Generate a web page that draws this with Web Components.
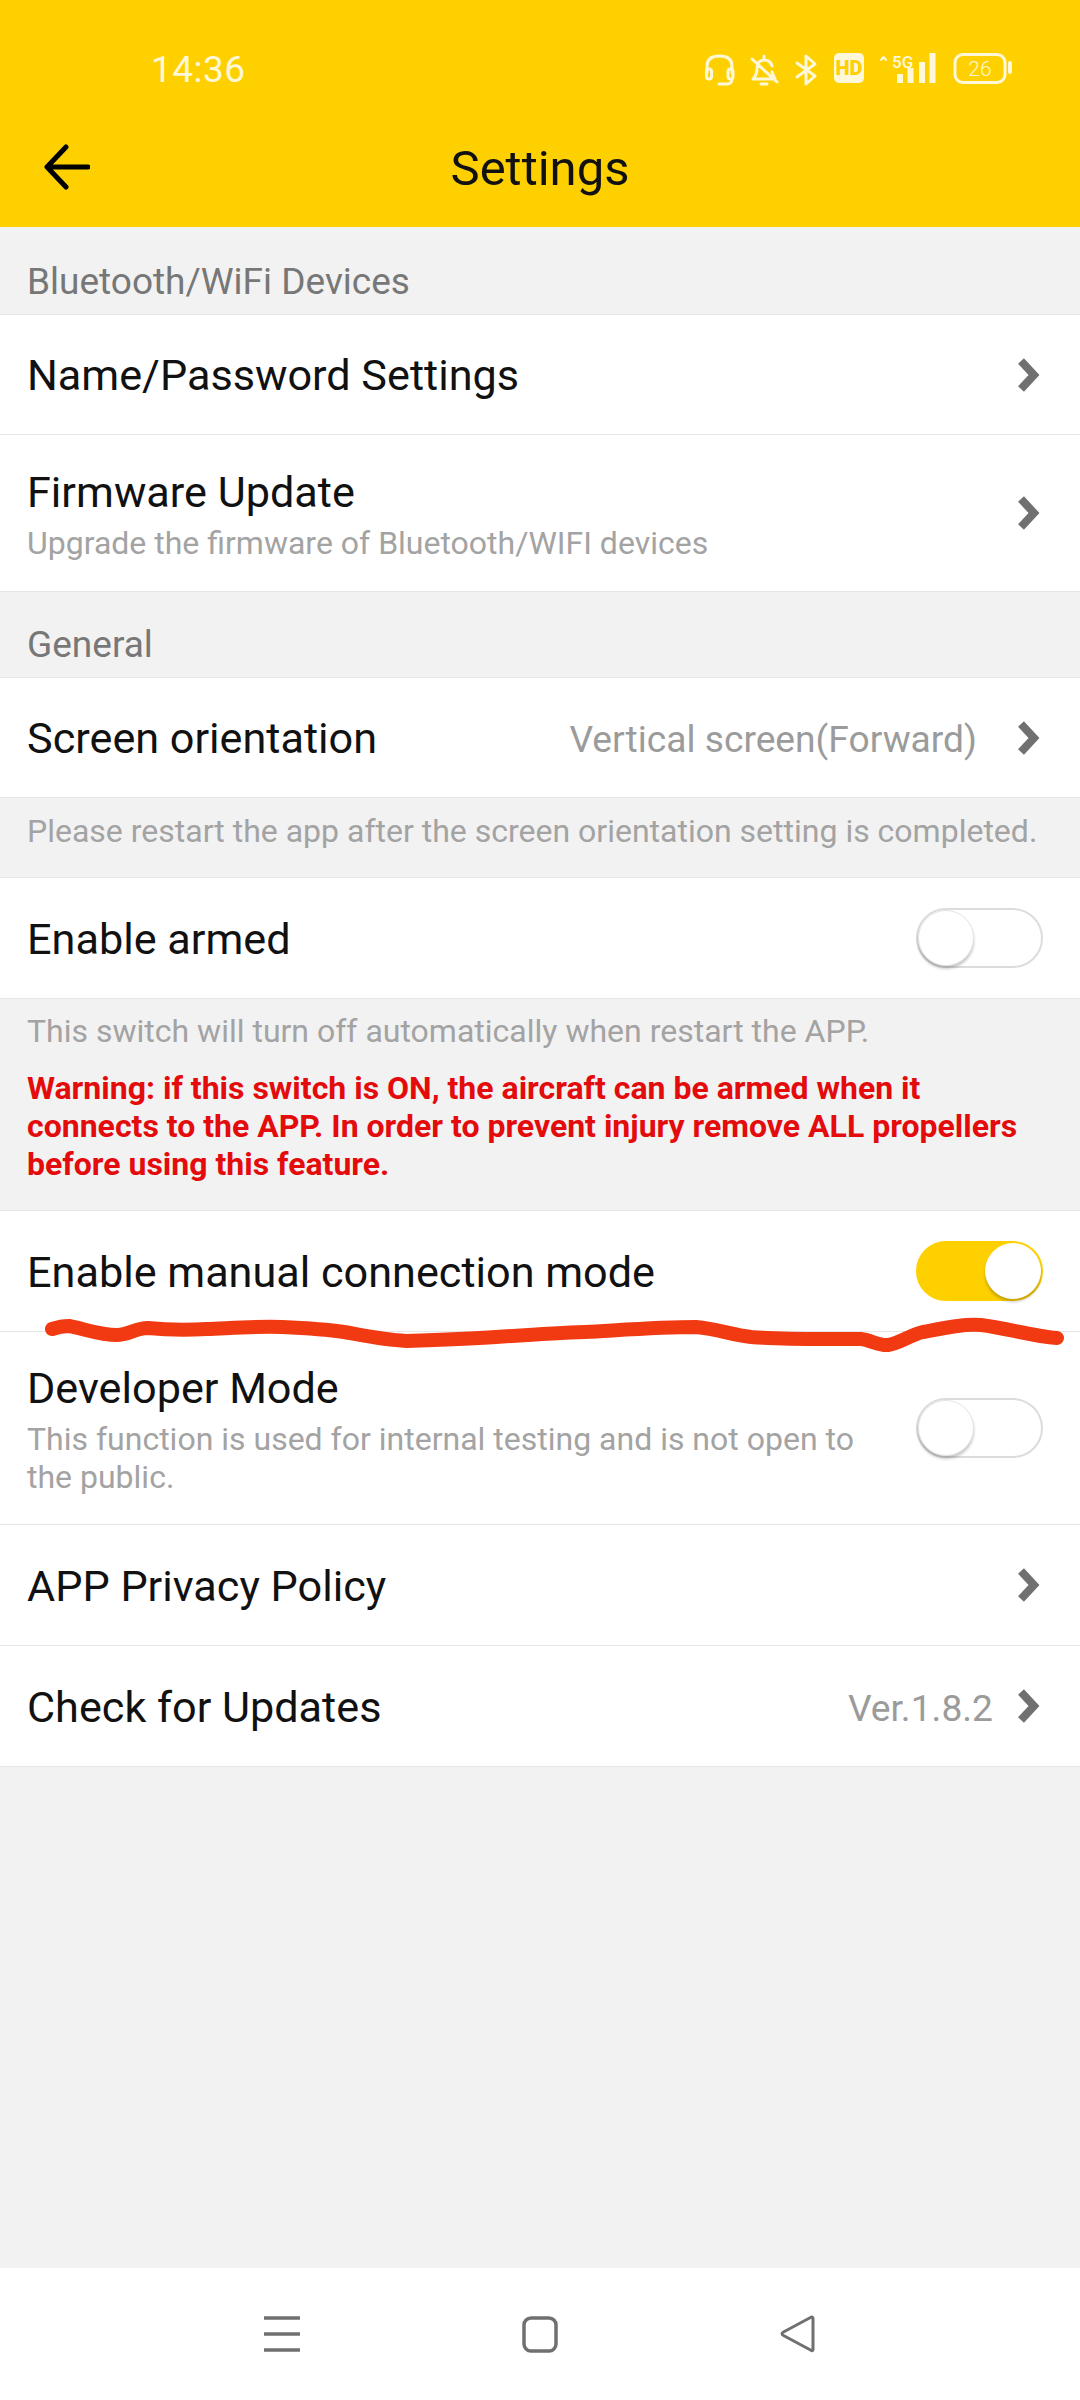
<!DOCTYPE html>
<html>
<head>
<meta charset="utf-8">
<title>Settings</title>
<style>
  html, body { margin: 0; padding: 0; }
  body { width: 1080px; height: 2400px; overflow: hidden; font-family: Roboto, "Liberation Sans", sans-serif; background: #f2f2f2; }
</style>
</head>
<body>
<settings-screen>
  <app-header slot="top">Settings</app-header>

  <section-label style="height: 87px">Bluetooth/WiFi Devices</section-label>
  <settings-row height="120">
    Name/Password Settings
    <chevron-icon slot="end"></chevron-icon>
  </settings-row>
  <settings-row height="157">
    Firmware Update
    <span slot="sub">Upgrade the firmware of Bluetooth/WIFI devices</span>
    <chevron-icon slot="end"></chevron-icon>
  </settings-row>

  <section-label>General</section-label>
  <settings-row height="120">
    Screen orientation
    <span slot="value" style="margin-right: 16px">Vertical screen(Forward)</span>
    <chevron-icon slot="end"></chevron-icon>
  </settings-row>
  <note-text>Please restart the app after the screen orientation setting is completed.</note-text>
  <settings-row height="121">
    Enable armed
    <toggle-switch slot="end"></toggle-switch>
  </settings-row>
  <warning-note>
    This switch will turn off automatically when restart the APP.
    <span slot="warning">Warning: if this switch is ON, the aircraft can be armed when it connects to the APP. In order to prevent injury remove ALL propellers before using this feature.</span>
  </warning-note>
  <settings-row height="121">
    Enable manual connection mode
    <toggle-switch slot="end" on></toggle-switch>
  </settings-row>
  <settings-row height="193">
    Developer Mode
    <span slot="sub">This function is used for internal testing and is not open to the public.</span>
    <toggle-switch slot="end"></toggle-switch>
  </settings-row>
  <settings-row height="121">
    APP Privacy Policy
    <chevron-icon slot="end"></chevron-icon>
  </settings-row>
  <settings-row height="121">
    Check for Updates
    <span slot="value">Ver.1.8.2</span>
    <chevron-icon slot="end"></chevron-icon>
  </settings-row>

  <nav-bar slot="bottom"></nav-bar>
</settings-screen>

<script>
class SettingsScreen extends HTMLElement {
    constructor() {
        super();
        this.shadowDOM = this.attachShadow({mode: "open"});
        this.shadowDOM.innerHTML = `
        <style>
            :host {
                display: flex;
                flex-direction: column;
                position: relative;
                width: 1080px;
                height: 2400px;
                background: #f2f2f2;
            }
            main { flex: 1; display: flex; flex-direction: column; }
            /* the hand drawn red line lies over the rows */
            svg { position: absolute; left: 0; top: 0; pointer-events: none; }
        </style>
        <slot name="top"></slot>
        <main><slot></slot></main>
        <slot name="bottom"></slot>
        <svg width="1080" height="2400" viewBox="0 0 1080 2400" fill="none">
            <path d="M52 1329C58 1327 63 1326 69 1326C85 1329 100 1335 117 1335C128 1335 136 1328 148 1328C168 1330 188 1330 207 1329C232 1328 258 1326 282 1327C304 1328 324 1329 344 1332C366 1336 384 1340 406 1341C436 1340 466 1339 496 1337C526 1335 556 1333 585 1332C622 1330 660 1327 696 1327C718 1329 732 1335 751 1337C788 1340 824 1339 861 1339C870 1340 880 1346 888 1345C900 1343 910 1335 923 1332C944 1328 962 1324 981 1325C1006 1328 1032 1336 1057 1338" stroke="#f23a12" stroke-width="14" stroke-linecap="round" stroke-linejoin="round"/>
        </svg>`;
    }
}

class AppHeader extends HTMLElement {
    constructor() {
        super();
        this.shadowDOM = this.attachShadow({mode: "open"});
        this.shadowDOM.innerHTML = `
        <style>
            :host {
                display: flex;
                flex-direction: column;
                height: 227px;
                background: #ffd000;
            }
            .bar {
                flex: 1;
                display: grid;
                grid-template-columns: 110px 1fr 110px;
                align-items: center;
                padding-top: 6px;
            }
            .title {
                text-align: center;
                font-size: 49px;
                color: #111;
            }
            .back { display: block; margin-left: 44px; margin-top: -3px; }
        </style>
        <status-bar></status-bar>
        <div class="bar">
            <svg class="back" width="46" height="46" viewBox="0 0 46 46" fill="none" stroke="#000" stroke-width="5" stroke-linecap="round" stroke-linejoin="round">
                <path d="M44 23H4M22 3L3 23L22 43"/>
            </svg>
            <div class="title"><slot></slot></div>
            <span></span>
        </div>`;
    }
}

class StatusBar extends HTMLElement {
    constructor() {
        super();
        this.shadowDOM = this.attachShadow({mode: "open"});
        this.shadowDOM.innerHTML = `
        <style>
            :host {
                display: flex;
                align-items: center;
                height: 70px;
                margin-top: 34px;
                padding: 0 68px 0 151px;
                color: #fff8d8;
            }
            .time { font-size: 37px; flex: 1; letter-spacing: 0.5px; }
            .icons { display: flex; align-items: center; }
            svg { display: block; }
        </style>
        <div class="time">14:36</div>
        <div class="icons">
            <svg width="307" height="40" viewBox="0 0 307 40" fill="none" stroke="#fff8d8" stroke-width="3" stroke-linecap="round" stroke-linejoin="round">
                <!-- headset -->
                <path d="M2 24V17C2 10 7 7 14.500 7C22 7 27 10 27 17V24"/>
                <rect x="1.500" y="20" width="5" height="10" rx="2.500"/>
                <rect x="23" y="20" width="5" height="10" rx="2.500"/>
                <path d="M27 30C27 33 25 35 22 35H14"/>
                <!-- muted bell -->
                <path d="M48 30C51 27 52 24 52 19C52 14 55 11 59 11C63 11 66 13 67 17M67 23C68 26 69 28 70 30H48M47 10L72 33M56 35H62M59 7V9"/>
                <!-- bluetooth -->
                <path d="M92 14L110 27L101 35V7L110 15L92 28"/>
                <!-- HD -->
                <rect x="129" y="4" width="30" height="30" rx="5" fill="#fff8d8" stroke="none"/>
                <text x="144" y="26" text-anchor="middle" font-family="Roboto" font-weight="900" font-size="20" fill="#ffd000" stroke="none">HD</text>
                <!-- 5G signal -->
                <path d="M176 11L178.500 8L181 11" stroke-width="2"/>
                <text x="187" y="19" font-family="Roboto" font-weight="500" font-size="17" fill="#fff8d8" stroke="none">5G</text>
                <path d="M195 34V25M205.500 34V19M217 34V13M227.500 34V4" stroke-width="6" stroke-linecap="butt"/>
                <!-- battery -->
                <rect x="250" y="5.500" width="50" height="28" rx="8"/>
                <path d="M305 14V23" stroke-width="4"/>
                <text x="275" y="27" text-anchor="middle" font-family="Roboto" font-weight="300" font-size="21" fill="#fff8d8" stroke="none">26</text>
            </svg>
        </div>`;
    }
}

class SectionLabel extends HTMLElement {
    constructor() {
        super();
        this.shadowDOM = this.attachShadow({mode: "open"});
        this.shadowDOM.innerHTML = `
        <style>
            :host {
                display: flex;
                align-items: center;
                height: 86px;
                padding: 21px 27px 0;
                box-sizing: border-box;
                font-size: 37px;
                color: #777;
            }
        </style>
        <slot></slot>`;
    }
}

class SettingsRow extends HTMLElement {
    constructor() {
        super();
        this.shadowDOM = this.attachShadow({mode: "open"});
        this.shadowDOM.innerHTML = `
        <style>
            :host {
                display: flex;
                align-items: center;
                box-sizing: border-box;
                padding: 0 39px 0 27px;
                background: #fff;
                border-top: 1px solid #e6e6e6;
                border-bottom: 1px solid #e6e6e6;
                margin-bottom: -1px;
                gap: 24px;
            }
            .text { flex: 1; min-width: 0; padding-top: 3px; }
            .title { font-size: 43.200px; color: #111; line-height: 50px; }
            ::slotted([slot="sub"]) {
                display: block;
                font-size: 32px;
                line-height: 38px;
                margin-top: 6px;
                color: #a3a3a3;
            }
            ::slotted([slot="value"]) {
                font-size: 37.200px;
                padding-top: 3px;
                color: #9b9b9b;
            }
        </style>
        <div class="text">
            <div class="title"><slot></slot></div>
            <slot name="sub"></slot>
        </div>
        <slot name="value"></slot>
        <slot name="end"></slot>`;
    }

    connectedCallback() {
        this.style.height = (Number(this.getAttribute("height")) + 1) + "px";
    }
}

class NoteText extends HTMLElement {
    constructor() {
        super();
        this.shadowDOM = this.attachShadow({mode: "open"});
        this.shadowDOM.innerHTML = `
        <style>
            :host {
                display: flex;
                align-items: center;
                box-sizing: border-box;
                height: 80px;
                padding: 0 27px 12px;
                font-size: 32px;
                color: #a3a3a3;
            }
        </style>
        <slot></slot>`;
    }
}

class WarningNote extends HTMLElement {
    constructor() {
        super();
        this.shadowDOM = this.attachShadow({mode: "open"});
        this.shadowDOM.innerHTML = `
        <style>
            :host {
                display: block;
                box-sizing: border-box;
                height: 212px;
                padding: 14px 27px 0;
                font-size: 32px;
                line-height: 38px;
                color: #a3a3a3;
            }
            ::slotted([slot="warning"]) {
                display: block;
                max-width: 1010px;
                margin-top: 19px;
                font-size: 32px;
                font-weight: 700;
                color: #e30b0b;
            }
        </style>
        <slot></slot>
        <slot name="warning"></slot>`;
    }
}

class ChevronIcon extends HTMLElement {
    constructor() {
        super();
        this.shadowDOM = this.attachShadow({mode: "open"});
        this.shadowDOM.innerHTML = `
        <style>
            :host { display: block; width: 24px; height: 34px; }
            svg { display: block; }
        </style>
        <svg width="24" height="34" viewBox="0 0 24 34" fill="none" stroke="#707070" stroke-width="8" stroke-linejoin="miter">
            <path d="M4 3L17 17L4 31"/>
        </svg>`;
    }
}

class ToggleSwitch extends HTMLElement {
    constructor() {
        super();
        this.shadowDOM = this.attachShadow({mode: "open"});
        this.shadowDOM.innerHTML = `
        <style>
            :host {
                display: flex;
                box-sizing: border-box;
                width: 127px;
                height: 60px;
                margin-right: -2px;
                border-radius: 30px;
                border: 2px solid #dcdcdc;
                background: #fff;
                flex-shrink: 0;
            }
            :host([on]) {
                background: #ffd000;
                border-color: #ffd000;
                justify-content: flex-end;
            }
            .knob {
                box-sizing: border-box;
                width: 56px;
                height: 56px;
                border-radius: 50%;
                background: #fff;
                border: 1px solid #e4e4e4;
                box-shadow: 0 3px 3px rgba(0, 0, 0, 0.22);
            }
            :host([on]) .knob { border-color: #fff; }
        </style>
        <div class="knob"></div>`;
    }
}

class NavBar extends HTMLElement {
    constructor() {
        super();
        this.shadowDOM = this.attachShadow({mode: "open"});
        this.shadowDOM.innerHTML = `
        <style>
            :host {
                display: flex;
                justify-content: center;
                gap: 222px;
                height: 132px;
                box-sizing: border-box;
                padding-top: 47px;
                background: #fff;
            }
            svg { display: block; }
        </style>
        <svg width="36" height="38" viewBox="0 0 36 38" fill="none" stroke="#707070" stroke-width="3.500">
            <path d="M0 3H36M0 19H36M0 35H36"/>
        </svg>
        <svg width="36" height="38" viewBox="0 0 36 38" fill="none" stroke="#707070" stroke-width="3.500">
            <rect x="2" y="3" width="32" height="33" rx="7"/>
        </svg>
        <svg width="36" height="38" viewBox="0 0 36 38" fill="none" stroke="#707070" stroke-width="3" stroke-linejoin="round">
            <path d="M33 3.500V34.500C33 36 32 36 30.500 35L3.500 20.500C1.500 19.500 1.500 18 3.500 17L30.500 2.500C32 1.500 33 2 33 3.500Z"/>
        </svg>`;
    }
}

customElements.define("settings-screen", SettingsScreen);
customElements.define("app-header", AppHeader);
customElements.define("status-bar", StatusBar);
customElements.define("section-label", SectionLabel);
customElements.define("settings-row", SettingsRow);
customElements.define("note-text", NoteText);
customElements.define("warning-note", WarningNote);
customElements.define("chevron-icon", ChevronIcon);
customElements.define("toggle-switch", ToggleSwitch);
customElements.define("nav-bar", NavBar);
</script>
</body>
</html>
